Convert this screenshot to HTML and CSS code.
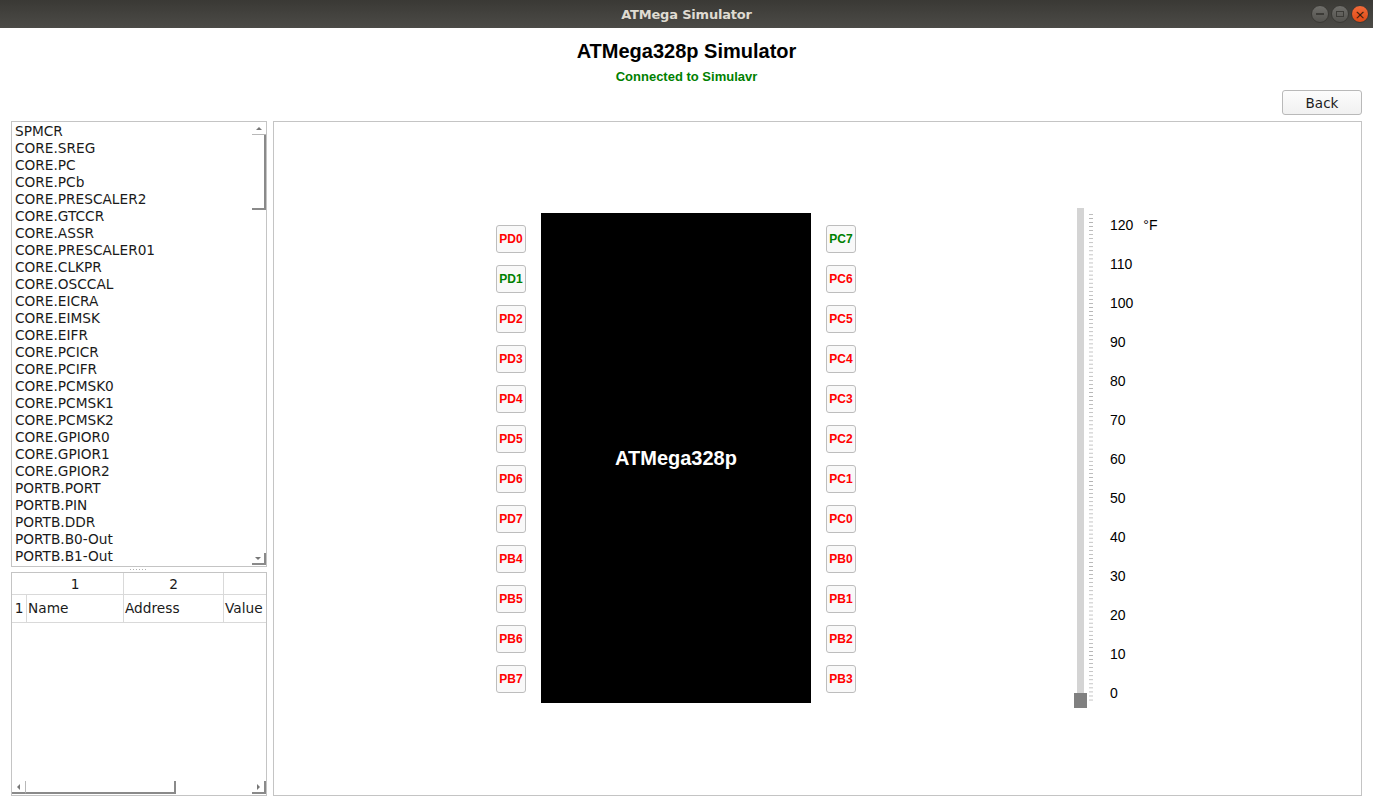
FILE: index.html
```html
<!DOCTYPE html>
<html>
<head>
<meta charset="utf-8">
<title>ATMega Simulator</title>
<link rel="stylesheet" href="styles.css">
</head>
<body>
<div class="window">
  <div class="titlebar">
    <span class="title">ATMega Simulator</span>
    <div class="controls">
      <span class="wbtn wmin"><span class="dash"></span></span>
      <span class="wbtn wmax"><span class="box"></span></span>
      <span class="wbtn wclose">×</span>
    </div>
  </div>
  <div class="app">
    <header class="head">
      <h1 class="heading">ATMega328p Simulator</h1>
      <p class="status">Connected to Simulavr</p>
    </header>
    <div class="toolbar"><button class="back">Back</button></div>
    <div class="main">
      <div class="left">
        <div class="reglist">
          <ul class="items">
            <li>SPMCR</li><li>CORE.SREG</li><li>CORE.PC</li><li>CORE.PCb</li><li>CORE.PRESCALER2</li>
            <li>CORE.GTCCR</li><li>CORE.ASSR</li><li>CORE.PRESCALER01</li><li>CORE.CLKPR</li><li>CORE.OSCCAL</li>
            <li>CORE.EICRA</li><li>CORE.EIMSK</li><li>CORE.EIFR</li><li>CORE.PCICR</li><li>CORE.PCIFR</li>
            <li>CORE.PCMSK0</li><li>CORE.PCMSK1</li><li>CORE.PCMSK2</li><li>CORE.GPIOR0</li><li>CORE.GPIOR1</li>
            <li>CORE.GPIOR2</li><li>PORTB.PORT</li><li>PORTB.PIN</li><li>PORTB.DDR</li><li>PORTB.B0-Out</li>
            <li>PORTB.B1-Out</li>
          </ul>
          <div class="vscroll">
            <div class="sbtn sbtn-v"><span class="tri tri-up"></span></div>
            <div class="vthumb"></div>
            <div class="vspace"></div>
            <div class="sbtn sbtn-v sbtn-end"><span class="tri tri-down"></span></div>
          </div>
        </div>
        <div class="splitter"><span class="grip"></span></div>
        <div class="table">
          <div class="grid">
            <div class="hcell corner"></div>
            <div class="hcell">1</div>
            <div class="hcell">2</div>
            <div class="hcell"></div>
            <div class="rhead">1</div>
            <div class="cell">Name</div>
            <div class="cell">Address</div>
            <div class="cell">Value</div>
          </div>
          <div class="tspace"></div>
          <div class="hscroll">
            <div class="sbtn sbtn-h"><span class="tri tri-left"></span></div>
            <div class="hthumb"></div>
            <div class="hspace"></div>
            <div class="sbtn sbtn-h sbtn-end"><span class="tri tri-right"></span></div>
          </div>
        </div>
      </div>
      <div class="board">
        <div class="pins">
          <span class="pin red">PD0</span>
          <span class="pin green">PD1</span>
          <span class="pin red">PD2</span>
          <span class="pin red">PD3</span>
          <span class="pin red">PD4</span>
          <span class="pin red">PD5</span>
          <span class="pin red">PD6</span>
          <span class="pin red">PD7</span>
          <span class="pin red">PB4</span>
          <span class="pin red">PB5</span>
          <span class="pin red">PB6</span>
          <span class="pin red">PB7</span>
        </div>
        <div class="chip">ATMega328p</div>
        <div class="pins">
          <span class="pin green">PC7</span>
          <span class="pin red">PC6</span>
          <span class="pin red">PC5</span>
          <span class="pin red">PC4</span>
          <span class="pin red">PC3</span>
          <span class="pin red">PC2</span>
          <span class="pin red">PC1</span>
          <span class="pin red">PC0</span>
          <span class="pin red">PB0</span>
          <span class="pin red">PB1</span>
          <span class="pin red">PB2</span>
          <span class="pin red">PB3</span>
        </div>
        <div class="thermo">
          <div class="slider">
            <div class="track"></div>
            <div class="handle"></div>
          </div>
          <div class="ticks"></div>
          <div class="scale">
            <span class="lbl">120<span class="unit">°F</span></span>
            <span class="lbl">110</span>
            <span class="lbl">100</span>
            <span class="lbl">90</span>
            <span class="lbl">80</span>
            <span class="lbl">70</span>
            <span class="lbl">60</span>
            <span class="lbl">50</span>
            <span class="lbl">40</span>
            <span class="lbl">30</span>
            <span class="lbl">20</span>
            <span class="lbl">10</span>
            <span class="lbl">0</span>
          </div>
        </div>
      </div>
    </div>
  </div>
</div>
</body>
</html>
```
FILE: styles.css
```css
* { box-sizing: border-box; }
html, body { margin: 0; padding: 0; }
body {
  width: 1373px;
  height: 807px;
  overflow: hidden;
  background: #ffffff;
  font-family: "DejaVu Sans", sans-serif;
}
.window { display: flex; flex-direction: column; height: 807px; }

.titlebar {
  height: 28px;
  flex: none;
  display: flex;
  align-items: center;
  justify-content: center;
  position: relative;
  background: linear-gradient(#3a3935, #4c4b47);
}
.title {
  color: #dfdbd2;
  font-family: "DejaVu Sans", sans-serif;
  font-weight: bold;
  font-size: 13px;
  letter-spacing: -0.2px;
}
.controls {
  position: absolute;
  right: 4px;
  top: 5px;
  display: flex;
  gap: 2px;
}
.wbtn {
  width: 18px;
  height: 18px;
  border-radius: 50%;
  display: flex;
  align-items: center;
  justify-content: center;
  background: linear-gradient(#6f6e6a, #54534f);
  border: 1px solid #3a3935;
}
.dash { width: 8px; height: 2px; background: #3c3b37; }
.box { width: 8px; height: 6px; border: 1.5px solid #3c3b37; }
.wclose {
  background: linear-gradient(#f26b3a, #df4a16);
  color: #3a1a0a;
  font-size: 13px;
  line-height: 1;
  font-family: "DejaVu Sans", sans-serif;
}

.app { flex: 1; display: flex; flex-direction: column; }
.head { text-align: center; padding-top: 11px; }
.heading {
  margin: 0;
  font-family: "Liberation Sans", Arial, sans-serif;
  font-weight: bold;
  font-size: 20px;
  line-height: 24px;
  color: #000;
}
.status {
  margin: 6px 0 0;
  font-family: "Liberation Sans", Arial, sans-serif;
  font-weight: bold;
  font-size: 13px;
  line-height: 16px;
  color: #008000;
}
.toolbar {
  display: flex;
  justify-content: flex-end;
  padding: 5px 11px 0 0;
}
.back {
  width: 80px;
  height: 25px;
  border: 1px solid #b9b9b9;
  border-radius: 3px;
  background: linear-gradient(#fcfcfc, #f1f1f1);
  font-family: "DejaVu Sans", sans-serif;
  font-size: 13.5px;
  color: #1d1d1d;
  padding: 0;
}

.main {
  display: flex;
  gap: 6px;
  padding: 6px 11px 0 11px;
  height: 681px;
}
.left {
  width: 256px;
  flex: none;
  display: flex;
  flex-direction: column;
}
.reglist {
  height: 446px;
  flex: none;
  border: 1px solid #c4c4c4;
  display: flex;
  overflow: hidden;
}
.items {
  list-style: none;
  margin: 0;
  padding: 1px 0 0 3px;
  flex: 1;
  font-size: 13.7px;
  line-height: 17px;
  color: #1a1a1a;
}
.vscroll {
  width: 14px;
  flex: none;
  display: flex;
  flex-direction: column;
}
.sbtn {
  flex: none;
  display: flex;
  align-items: center;
  justify-content: center;
}
.sbtn-v { height: 13px; border-bottom: 1px solid #b8b8b8; }
.sbtn-v.sbtn-end { border-bottom: 2px solid #8a8a8a; border-right: 2px solid #8a8a8a; height: 12px; margin-bottom: 1px; }
.vthumb {
  height: 75px;
  flex: none;
  border-right: 2px solid #8a8a8a;
  border-bottom: 2px solid #8a8a8a;
}
.vspace { flex: 1; }
.tri { width: 0; height: 0; }
.tri-up { border-left: 3px solid transparent; border-right: 3px solid transparent; border-bottom: 3px solid #777; }
.tri-down { border-left: 3px solid transparent; border-right: 3px solid transparent; border-top: 3px solid #777; }
.tri-left { border-top: 3px solid transparent; border-bottom: 3px solid transparent; border-right: 3px solid #777; }
.tri-right { border-top: 3px solid transparent; border-bottom: 3px solid transparent; border-left: 3px solid #777; }

.splitter {
  height: 5px;
  flex: none;
  display: flex;
  align-items: center;
  justify-content: center;
}
.grip {
  width: 18px;
  height: 1px;
  background: repeating-linear-gradient(90deg, #b0b0b0 0 1px, transparent 1px 3px);
}

.table {
  flex: 1;
  border: 1px solid #c4c4c4;
  display: flex;
  flex-direction: column;
  overflow: hidden;
}
.grid {
  display: grid;
  grid-template-columns: 15px 97px 100px 100px;
  grid-template-rows: 22px 28px;
  font-size: 13.7px;
  color: #1a1a1a;
  width: 312px;
}
.hcell {
  border-right: 1px solid #d9d9d9;
  border-bottom: 1px solid #d9d9d9;
  text-align: center;
  line-height: 22px;
}
.hcell.corner { border-right: none; }
.rhead {
  border-right: 1px solid #d9d9d9;
  border-bottom: 1px solid #d9d9d9;
  line-height: 27px;
  text-align: center;
}
.cell {
  border-right: 1px solid #d9d9d9;
  border-bottom: 1px solid #d9d9d9;
  line-height: 27px;
  padding-left: 1px;
  white-space: nowrap;
}
.tspace { flex: 1; }
.hscroll {
  height: 13px;
  flex: none;
  display: flex;
  margin-bottom: 1px;
}
.sbtn-h { width: 14px; border-right: 1px solid #b8b8b8; border-bottom: 2px solid #8a8a8a; }
.sbtn-h.sbtn-end { border-right: 2px solid #8a8a8a; border-left: none; }
.hthumb {
  width: 150px;
  flex: none;
  border-right: 2px solid #8a8a8a;
  border-bottom: 2px solid #8a8a8a;
}
.hspace { flex: 1; }

.board {
  flex: 1;
  border: 1px solid #c4c4c4;
  display: flex;
  align-items: flex-start;
  padding: 91px 0 0 222px;
}
.pins {
  width: 30px;
  flex: none;
  display: flex;
  flex-direction: column;
  gap: 12px;
  padding-top: 12px;
}
.pin {
  height: 28px;
  border: 1px solid #bdbdbd;
  border-radius: 3px;
  background: #f9f9f9;
  display: flex;
  align-items: center;
  justify-content: center;
  font-family: "Liberation Sans", Arial, sans-serif;
  font-weight: bold;
  font-size: 12px;
}
.red { color: #ff0000; }
.green { color: #008000; }
.chip {
  width: 270px;
  height: 490px;
  flex: none;
  margin: 0 15px;
  background: #000;
  color: #fff;
  display: flex;
  align-items: center;
  justify-content: center;
  font-family: "Liberation Sans", Arial, sans-serif;
  font-weight: bold;
  font-size: 20px;
}
.thermo {
  display: flex;
  margin: -5px 0 0 218px;
  height: 500px;
}
.slider {
  width: 13px;
  display: flex;
  flex-direction: column;
  align-items: center;
}
.track { flex: 1; width: 7px; background: #d4d4d4; }
.handle { width: 13px; height: 15px; background: #808080; flex: none; }
.ticks {
  width: 4px;
  margin: 6px 0 0 2px;
  height: 488px;
  background-image: linear-gradient(#b4b4b4 0 1px, transparent 1px);
  background-size: 4px 4.05px;
}
.scale {
  display: flex;
  flex-direction: column;
  justify-content: space-between;
  margin: 9px 0 0 17px;
  height: 484px;
  font-family: "Liberation Sans", Arial, sans-serif;
  font-size: 14px;
  line-height: 16px;
  color: #000;
}
.unit { margin-left: 10px; }
```
